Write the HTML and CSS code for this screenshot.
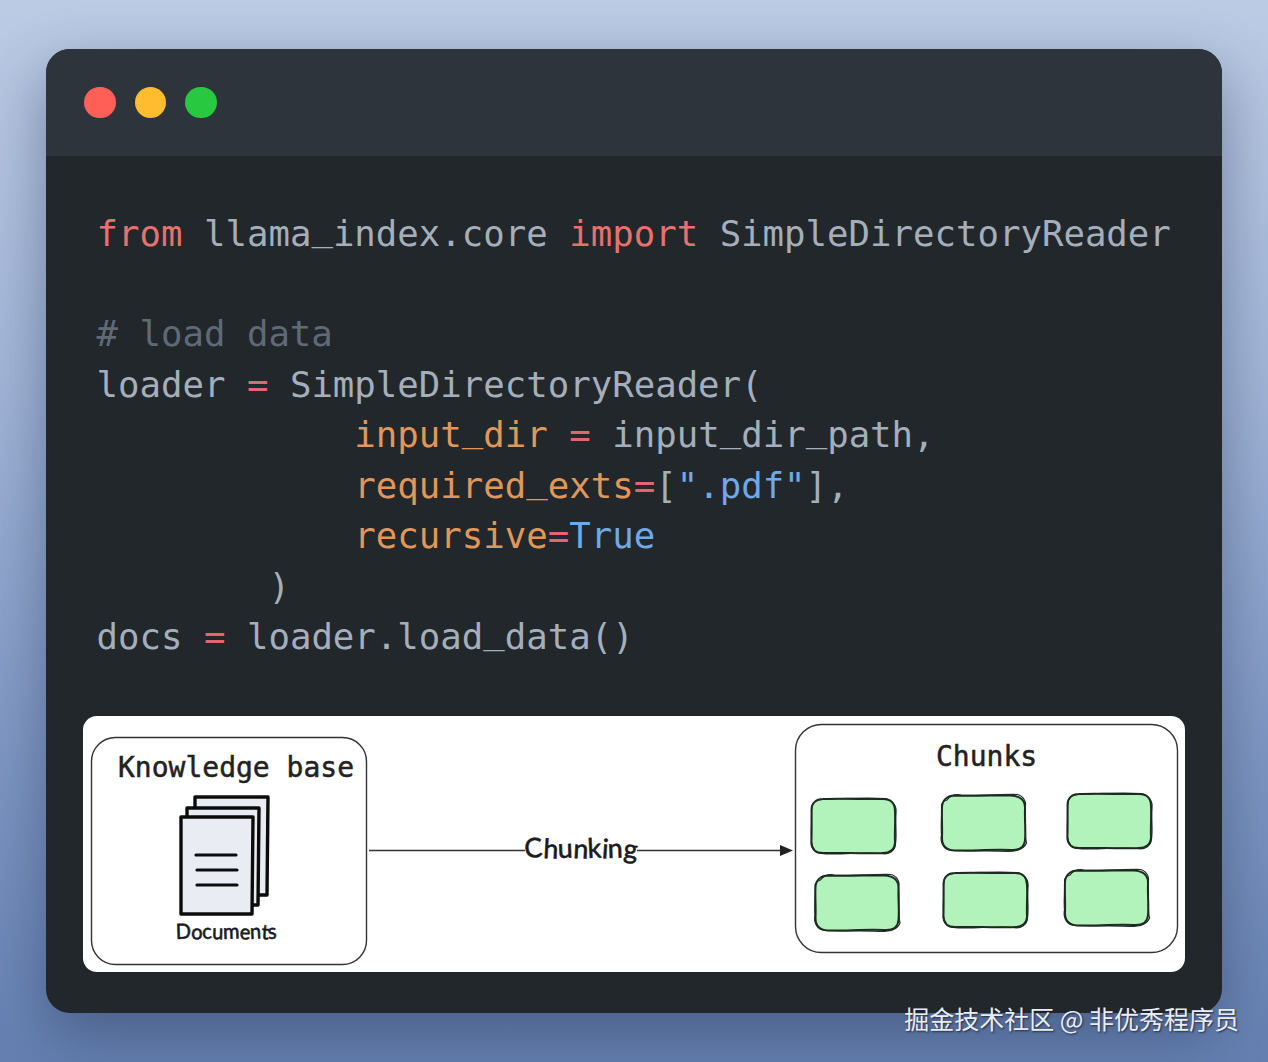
FILE: index.html
```html
<!DOCTYPE html>
<html lang="en">
<head>
<meta charset="utf-8">
<title>SimpleDirectoryReader</title>
<link rel="stylesheet" href="styles.css">
</head>
<body>
<main class="window">
  <header class="titlebar">
    <span class="dot dot-red"></span>
    <span class="dot dot-yellow"></span>
    <span class="dot dot-green"></span>
  </header>
  <pre class="code"><span class="kw">from</span> llama<span class="us">_</span>index.core <span class="kw">import</span> SimpleDirectoryReader

<span class="cm"># load data</span>
loader <span class="op">=</span> SimpleDirectoryReader(
            <span class="arg">input<span class="us">_</span>dir</span> <span class="op">=</span> input<span class="us">_</span>dir<span class="us">_</span>path,
            <span class="arg">required<span class="us">_</span>exts</span><span class="op">=</span>[<span class="val">".pdf"</span>],
            <span class="arg">recursive</span><span class="op">=</span><span class="val">True</span>
        )
docs <span class="op">=</span> loader.load<span class="us">_</span>data()</pre>
  <figure class="diagram">
    <svg class="diagram-svg" viewBox="83 716 1102 256" width="1102" height="256">
      <defs>
        <g id="chunk-a">
          <path class="chunk-fill" d="M12 1 C30 0 55 1 72 1 C80 1 84 6 84 13 L84 44 C84 51 79 55 72 55 L12 55 C5 55 1 51 1 44 L1 12 C1 5 5 1 12 1 Z"/>
          <path class="chunk-line" d="M12 1 C30 0 55 1.5 72 1 C80 1 84 6 84 13 C84.5 25 83.5 35 84 44 C84 51 79 55 72 55 C55 56 30 54.5 12 55 C5 55 .5 51 .5 44 C0 32 1 22 .5 12 C.5 5 5 1 12 1 Z"/>
          <path class="chunk-line thin" d="M10 1.5 C30 .5 58 -.5 74 .5 C81 1 86 8 85 15 C84 26 86 36 84.5 46 C84 53 78 57 70 55.5 C52 53.5 28 57.5 10 55.5 C4 55 -1 50 .5 42 C1.5 30 -.5 20 1 10 C1.5 4 6 2 10 1.5 Z"/>
        </g>
        <g id="chunk-b">
          <path class="chunk-fill" d="M12 1 L72 1 C80 1 84 6 84 13 L84 44 C84 51 79 55 72 55 L12 55 C5 55 1 51 1 44 L1 12 C1 5 5 1 12 1 Z"/>
          <path class="chunk-line" d="M14 .5 C32 1.5 56 0 70 .5 C79 1 84.5 5 84 14 C83.5 26 85 34 84 45 C83.5 52 78 55.5 70 55 C52 54 30 56 13 55.5 C5 55 1 50 1 43 C1.5 32 .5 22 1 12 C1.5 5 6 .5 14 .5 Z"/>
          <path class="chunk-line thin" d="M6 5 C9 1 14 -1 20 0 C38 1.5 60 -1 76 -.5 C82 .5 86 7 84 12 C85.5 26 83 38 85.5 48 C83 54.5 76 56.5 66 56.5 C50 55 26 57 8 55 C2 53 -1 47 .5 40 C-.5 28 1.5 16 .5 10 C1 8 3 6 6 5 Z"/>
        </g>
      </defs>

      <rect class="frame" x="91.5" y="737.5" width="275" height="227" rx="24"/>
      <text class="title" x="118" y="777">Knowledge base</text>

      <path class="page" d="M195 797 L268 797 L267 895 L195 895 Z"/>
      <path class="page" d="M187 808 L259 808 L258 905 L187 905 Z"/>
      <path class="page" d="M181 817 L253 817 L252 914 L181 914 Z"/>
      <path class="page-line" d="M196 855 L236 855 M197 870 L237 870 M197 885 L237 885"/>
      <text class="hand hand-small" x="176" y="939" textLength="101" lengthAdjust="spacingAndGlyphs" rotate="-2 3 -3 2 -2 3 -3 4 -4">Documents</text>

      <path class="arrow-line" d="M369 850.5 L525 850.5 M637 850.5 L783 850.5"/>
      <path class="arrow-head" d="M780 845 L793 850.5 L780 856 Z"/>
      <text class="hand hand-large" x="525" y="858" textLength="112" lengthAdjust="spacingAndGlyphs" rotate="-4 3 -2 3 -3 4 -2 5">Chunking</text>

      <rect class="frame" x="795.5" y="724.5" width="382" height="228" rx="26"/>
      <text class="title" x="936" y="766">Chunks</text>

      <use href="#chunk-a" x="811" y="798"/>
      <use href="#chunk-b" x="941" y="795"/>
      <use href="#chunk-a" x="1067" y="793"/>
      <use href="#chunk-b" x="814.5" y="875"/>
      <use href="#chunk-a" x="943" y="872"/>
      <use href="#chunk-b" x="1064" y="870"/>
    </svg>
  </figure>
</main>
<p class="watermark">掘金技术社区 @ 非优秀程序员</p>
</body>
</html>
```
FILE: styles.css
```css
* { box-sizing: border-box; }

html, body { margin: 0; height: 100%; }

body {
  position: relative;
  height: 1062px;
  overflow: hidden;
  padding: 49px 46px 0;
  background: linear-gradient(180deg, #bccbe4 0%, #a3b6d8 35%, #7f97c3 70%, #6580b1 100%);
}

.window {
  display: flex;
  flex-direction: column;
  height: 964px;
  background: #22272c;
  border-radius: 24px;
  overflow: hidden;
  box-shadow: 0 22px 60px rgba(35, 50, 85, .45);
}

.titlebar {
  display: flex;
  align-items: center;
  gap: 19px;
  height: 107px;
  padding: 0 0 0 38px;
  background: #2e343c;
}

.dot { width: 31.5px; height: 31.5px; border-radius: 50%; }
.dot-red { background: #ff5f57; }
.dot-yellow { background: #febc2e; }
.dot-green { background: #28c840; }

.code {
  margin: 0;
  padding: 52.5px 0 0 50.5px;
  font: 400 35.7px/50.45px "DejaVu Sans Mono", monospace;
  color: #a5afbb;
}

.us { line-height: 0; vertical-align: 6px; }

.kw { color: #e5736d; }
.cm { color: #5f6a76; }
.op { color: #e0676f; }
.arg { color: #e0975a; }
.val { color: #6fa9e8; }

.diagram {
  margin: 53.4px 37px 0;
  height: 256px;
  background: #fff;
  border-radius: 14px;
  overflow: hidden;
}

.diagram-svg { display: block; }

.frame { fill: #fff; stroke: #333; stroke-width: 1.4; }

.title {
  font: 400 28px "DejaVu Sans Mono", monospace;
  fill: #222;
  stroke: #222;
  stroke-width: .5;
}

.page { fill: #e9edf3; stroke: #0c0c0c; stroke-width: 3.4; stroke-linejoin: round; }
.page-line { fill: none; stroke: #0c0c0c; stroke-width: 3.2; stroke-linecap: round; }

.hand { font-family: Lato, sans-serif; fill: #1a1a1a; stroke: #1a1a1a; stroke-width: .6; }
.hand-small { font-size: 21px; }
.hand-large { font-size: 27px; }

.arrow-line { fill: none; stroke: #333; stroke-width: 1.4; }
.arrow-head { fill: #222; }

.chunk-fill { fill: #b2f2bb; }
.chunk-line { fill: none; stroke: #1e2a22; stroke-width: 2; }
.chunk-line.thin { stroke-width: 1.2; }

.watermark {
  position: absolute;
  right: 29px;
  bottom: 28px;
  margin: 0;
  font: 400 25px/32px "Noto Sans CJK SC", sans-serif;
  color: #e9edf4;
  text-shadow: 1px 1px 2px rgba(20, 25, 40, .8);
  white-space: nowrap;
}
```
